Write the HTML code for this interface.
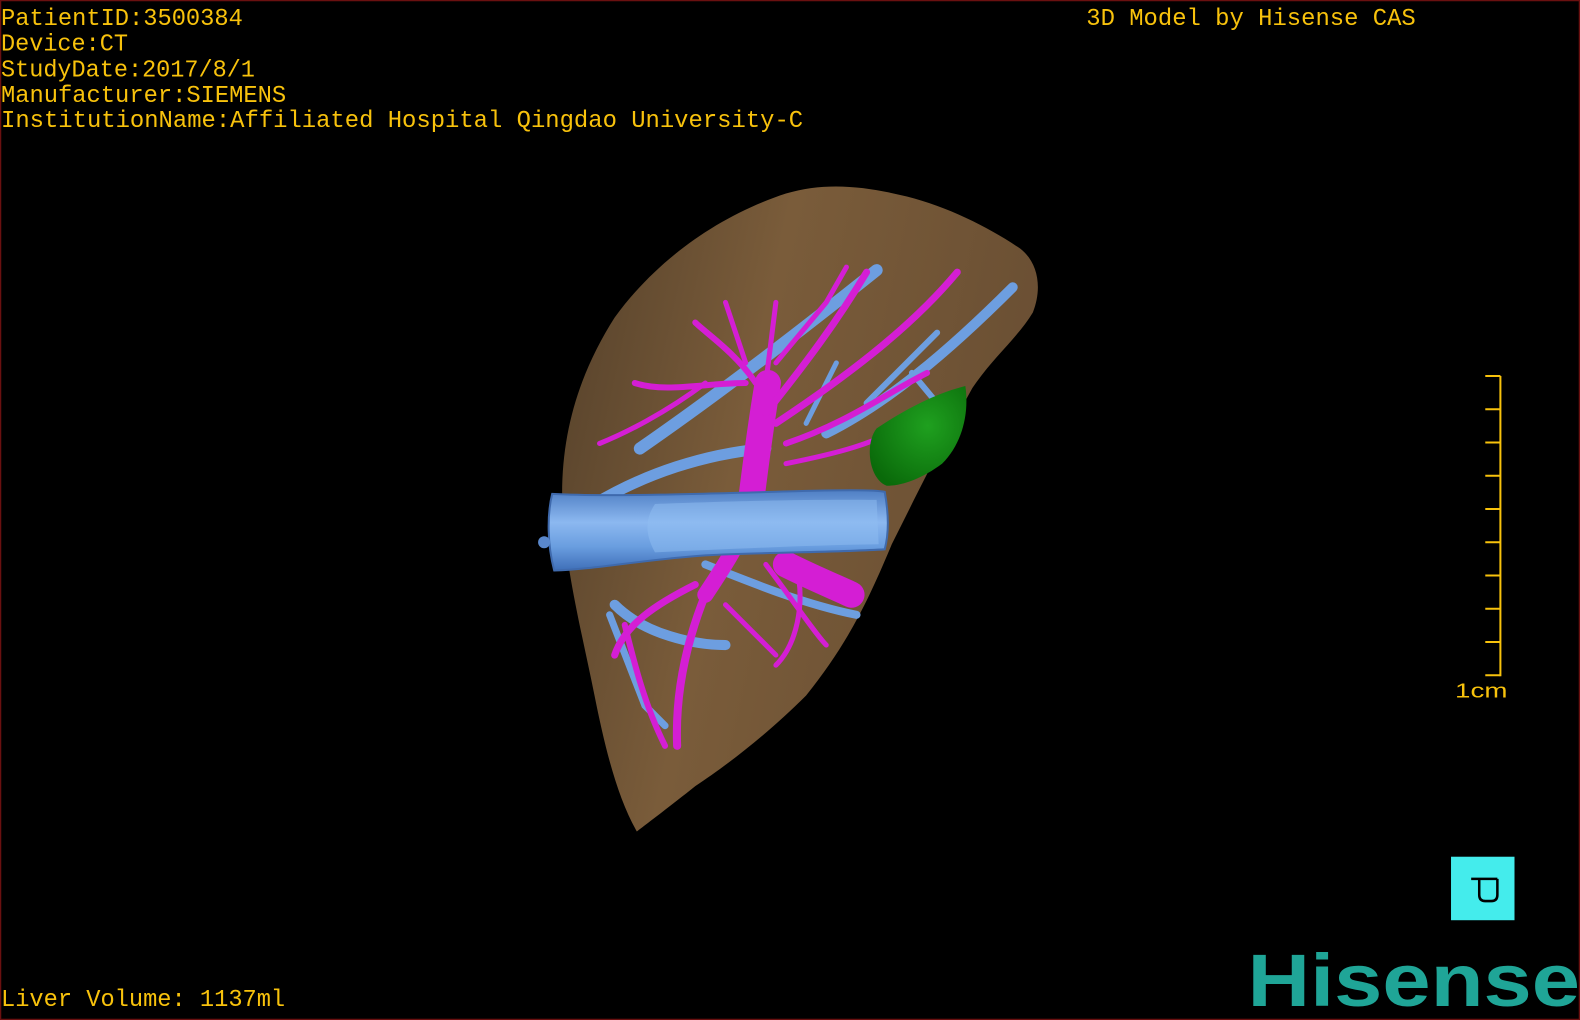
<!DOCTYPE html>
<html><head><meta charset="utf-8"><style>
html,body{margin:0;padding:0;background:#000;width:1580px;height:1020px;overflow:hidden}
svg{display:block}
</style></head><body>
<svg width="1580" height="1020" viewBox="0 0 1568 1012" preserveAspectRatio="none" xmlns="http://www.w3.org/2000/svg">
<defs>
<linearGradient id="lv" x1="0" y1="0" x2="1" y2="0.3">
<stop offset="0" stop-color="#54402a"/><stop offset="0.45" stop-color="#7a5c3a"/><stop offset="1" stop-color="#6a4f33"/>
</linearGradient>
<linearGradient id="ivc" x1="0" y1="0" x2="0" y2="1">
<stop offset="0" stop-color="#4f7fc4"/><stop offset="0.4" stop-color="#8cb8f0"/><stop offset="0.7" stop-color="#6a9ee0"/><stop offset="1" stop-color="#3f6fb8"/>
</linearGradient>
<radialGradient id="gr" cx="0.6" cy="0.4" r="0.7"><stop offset="0" stop-color="#1fa01f"/><stop offset="1" stop-color="#0a6a0a"/></radialGradient>
</defs>
<rect x="0" y="0" width="1568" height="1012" fill="#000"/>
<rect x="0.5" y="0.5" width="1567" height="1011" fill="none" stroke="#6a1010" stroke-width="1.5"/>
<path d="M632,825 C612,790 600,740 590,690 C578,630 560,560 558,500 C556,430 575,370 610,315 C650,260 710,215 780,192 C820,180 860,185 900,195 C940,205 980,225 1010,245 C1030,258 1035,285 1025,310 C1010,335 985,355 965,385 C940,430 915,480 885,540 C860,600 840,640 800,690 C760,730 720,760 690,780 C665,800 645,815 632,825 Z" fill="url(#lv)"/>
<g stroke="#6d9ee0" stroke-linecap="round" fill="none">
<path d="M635,445 C700,400 780,340 870,268" stroke-width="12"/>
<path d="M590,500 C640,470 700,450 760,445" stroke-width="11"/>
<path d="M820,430 C880,400 940,350 1005,285" stroke-width="10"/>
<path d="M860,400 L930,330 M905,370 L930,400" stroke-width="6"/>
<path d="M610,600 C640,630 690,640 720,640" stroke-width="10"/>
<path d="M700,560 C750,580 800,600 850,610" stroke-width="8"/>
<path d="M830,360 L800,420" stroke-width="5"/>
<path d="M605,610 L640,700 L660,720" stroke-width="7"/>
</g>
<g stroke="#d41ed4" stroke-linecap="round" fill="none">
<path d="M762,380 C755,420 750,460 745,500" stroke-width="26"/>
<path d="M745,500 C740,530 720,560 700,590" stroke-width="16"/>
<path d="M780,560 C810,575 835,585 845,590" stroke-width="26"/>
<path d="M700,590 C680,640 670,690 672,740" stroke-width="8"/>
<path d="M690,580 C650,600 620,620 610,650" stroke-width="7"/>
<path d="M620,620 C630,660 640,700 660,740" stroke-width="6"/>
<path d="M760,410 C800,360 830,320 860,270" stroke-width="7"/>
<path d="M770,420 C830,380 900,330 950,270" stroke-width="7"/>
<path d="M780,440 C840,420 880,390 920,370" stroke-width="6"/>
<path d="M750,380 C730,350 700,330 690,320" stroke-width="6"/>
<path d="M740,380 C700,380 660,390 630,380" stroke-width="6"/>
<path d="M700,380 C660,410 620,430 595,440" stroke-width="5"/>
<path d="M760,380 L770,300 M740,360 L720,300 M770,360 L820,300 M820,300 L840,265" stroke-width="5"/>
<path d="M780,460 C830,450 870,440 900,420" stroke-width="5"/>
<path d="M760,560 C790,600 810,630 820,640" stroke-width="5"/>
<path d="M720,600 C740,620 760,640 770,650" stroke-width="5"/>
<path d="M790,560 C800,600 790,640 770,660" stroke-width="5"/>
</g>
<path d="M548,490 C600,493 700,490 800,487 C840,486 870,486 878,488 C882,510 882,530 878,545 C830,548 760,548 700,551 C640,555 590,565 550,566 C543,540 543,510 548,490 Z" fill="url(#ivc)" stroke="#3f6aad" stroke-width="2"/>
<path d="M650,500 C700,498 800,495 870,496 L872,540 C800,541 720,545 650,548 C640,530 640,515 650,500 Z" fill="#8fbdf2" opacity="0.5"/>
<circle cx="540" cy="538" r="6" fill="#5a88cc"/>
<path d="M870,425 C900,405 930,390 958,383 C962,410 955,440 935,460 C915,475 895,482 880,482 C862,475 858,440 870,425 Z" fill="url(#gr)"/>
<g font-family="'Liberation Mono', monospace" font-size="24" fill="#f8c20c">
<text x="1" y="25" textLength="240" lengthAdjust="spacingAndGlyphs">PatientID:3500384</text>
<text x="1" y="50" textLength="126" lengthAdjust="spacingAndGlyphs">Device:CT</text>
<text x="1" y="76" textLength="252" lengthAdjust="spacingAndGlyphs">StudyDate:2017/8/1</text>
<text x="1" y="101" textLength="283" lengthAdjust="spacingAndGlyphs">Manufacturer:SIEMENS</text>
<text x="1" y="126" textLength="796" lengthAdjust="spacingAndGlyphs">InstitutionName:Affiliated Hospital Qingdao University-C</text>
<text x="1078" y="25" textLength="327" lengthAdjust="spacingAndGlyphs">3D Model by Hisense CAS</text>
<text x="1" y="998" textLength="282" lengthAdjust="spacingAndGlyphs">Liver Volume: 1137ml</text>
</g>
<g stroke="#f8c20c" stroke-width="2" fill="none">
<path d="M1489,373 V671"/>
<path d="M1474,373H1489 M1474,406H1489 M1474,439H1489 M1474,472H1489 M1474,505H1489 M1474,538H1489 M1474,571H1489 M1474,604H1489 M1474,637H1489 M1474,670H1489"/>
</g>
<text x="1444" y="692" font-family="'Liberation Sans', sans-serif" font-size="20" fill="#f8c20c" textLength="52" lengthAdjust="spacingAndGlyphs">1cm</text>
<rect x="1440" y="850" width="63" height="63" fill="#44ecec"/>
<path d="M1460,872 H1486 M1468,872 V888 Q1468,894 1474,894 H1480 Q1486,894 1486,888 V872" stroke="#000" stroke-width="2.5" fill="none"/>
<text x="1238" y="998" font-family="'Liberation Sans', sans-serif" font-weight="bold" font-size="74" fill="#1fa597" textLength="330" lengthAdjust="spacingAndGlyphs">Hisense</text>
</svg>
</body></html>
